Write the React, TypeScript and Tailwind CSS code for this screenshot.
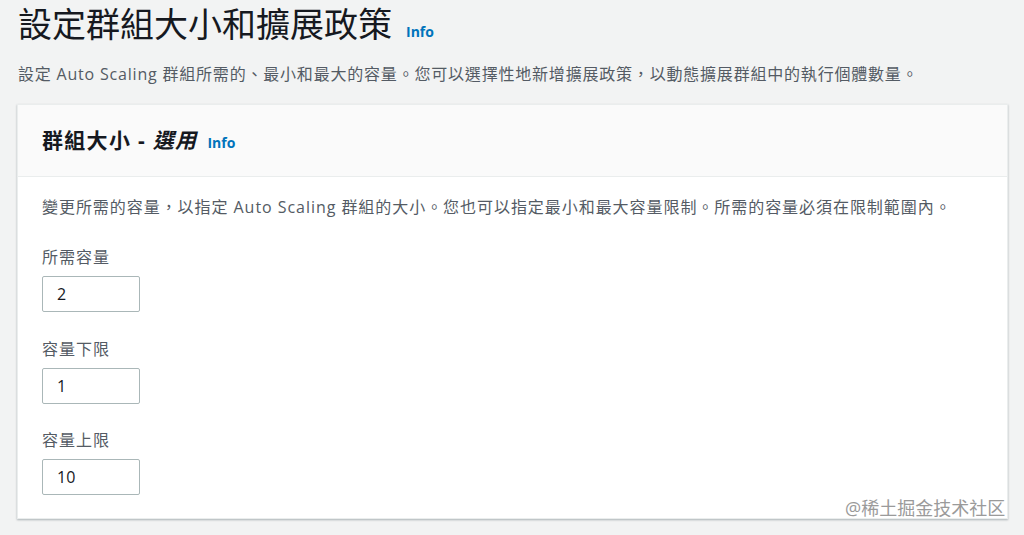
const cjk = { fontFamily: '"Open Sans", "Noto Sans CJK TC", sans-serif' };

function Info({ className = "" }: { className?: string }) {
  return <span className={`font-bold text-[14px] tracking-normal text-[#0073bb] ${className}`}>Info</span>;
}

function Field({ label, value, top }: { label: string; value: string; top: string }) {
  return (
    <div className={top}>
      <div className="text-[16px] leading-[22px] tracking-[1px] text-[#545b64]">{label}</div>
      <div className="mt-[8px] w-[98px] h-[36px] border border-[#aab7b8] rounded-[2px] bg-white flex items-center px-[14px] text-[16px] text-[#16191f]">
        {value}
      </div>
    </div>
  );
}

export default function App() {
  return (
    <div className="relative w-[1024px] h-[535px] bg-[#f2f3f3] overflow-hidden" style={cjk}>
      <div className="pl-[18px] pt-[4px] flex items-baseline">
        <h1 className="text-[34px] leading-[40px] text-[#16191f] font-normal">設定群組大小和擴展政策</h1>
        <Info className="ml-[14px]" />
      </div>
      <p className="pl-[18px] mt-[19px] text-[16px] leading-[22px] tracking-[0.8px] text-[#545b64]">
        設定 Auto Scaling 群組所需的、最小和最大的容量。您可以選擇性地新增擴展政策，以動態擴展群組中的執行個體數量。
      </p>
      <div className="ml-[17px] mt-[19px] w-[991px] bg-white border border-[#eaeded] shadow-[0_1px_2px_rgba(0,28,36,0.3)]">
        <div className="h-[72px] bg-[#fafafa] border-b border-[#eaeded] flex items-center px-[24px]">
          <span className="text-[21px] font-bold tracking-[1.3px] text-[#16191f]">
            群組大小 - <i>選用</i>
          </span>
          <Info className="ml-[10px] mt-[3px]" />
        </div>
        <div className="px-[24px] pt-[19px] pb-[23px]">
          <p className="text-[16px] leading-[22px] tracking-[0.95px] text-[#545b64]">
            變更所需的容量，以指定 Auto Scaling 群組的大小。您也可以指定最小和最大容量限制。所需的容量必須在限制範圍內。
          </p>
          <Field label="所需容量" value="2" top="mt-[28px]" />
          <Field label="容量下限" value="1" top="mt-[26px]" />
          <Field label="容量上限" value="10" top="mt-[25px]" />
        </div>
      </div>
      <div className="absolute left-[845px] top-[496px] text-[18px] leading-[24px] text-[#9a9a9a] [text-shadow:0_0_2px_#fff]">
        @稀土掘金技术社区
      </div>
    </div>
  );
}
